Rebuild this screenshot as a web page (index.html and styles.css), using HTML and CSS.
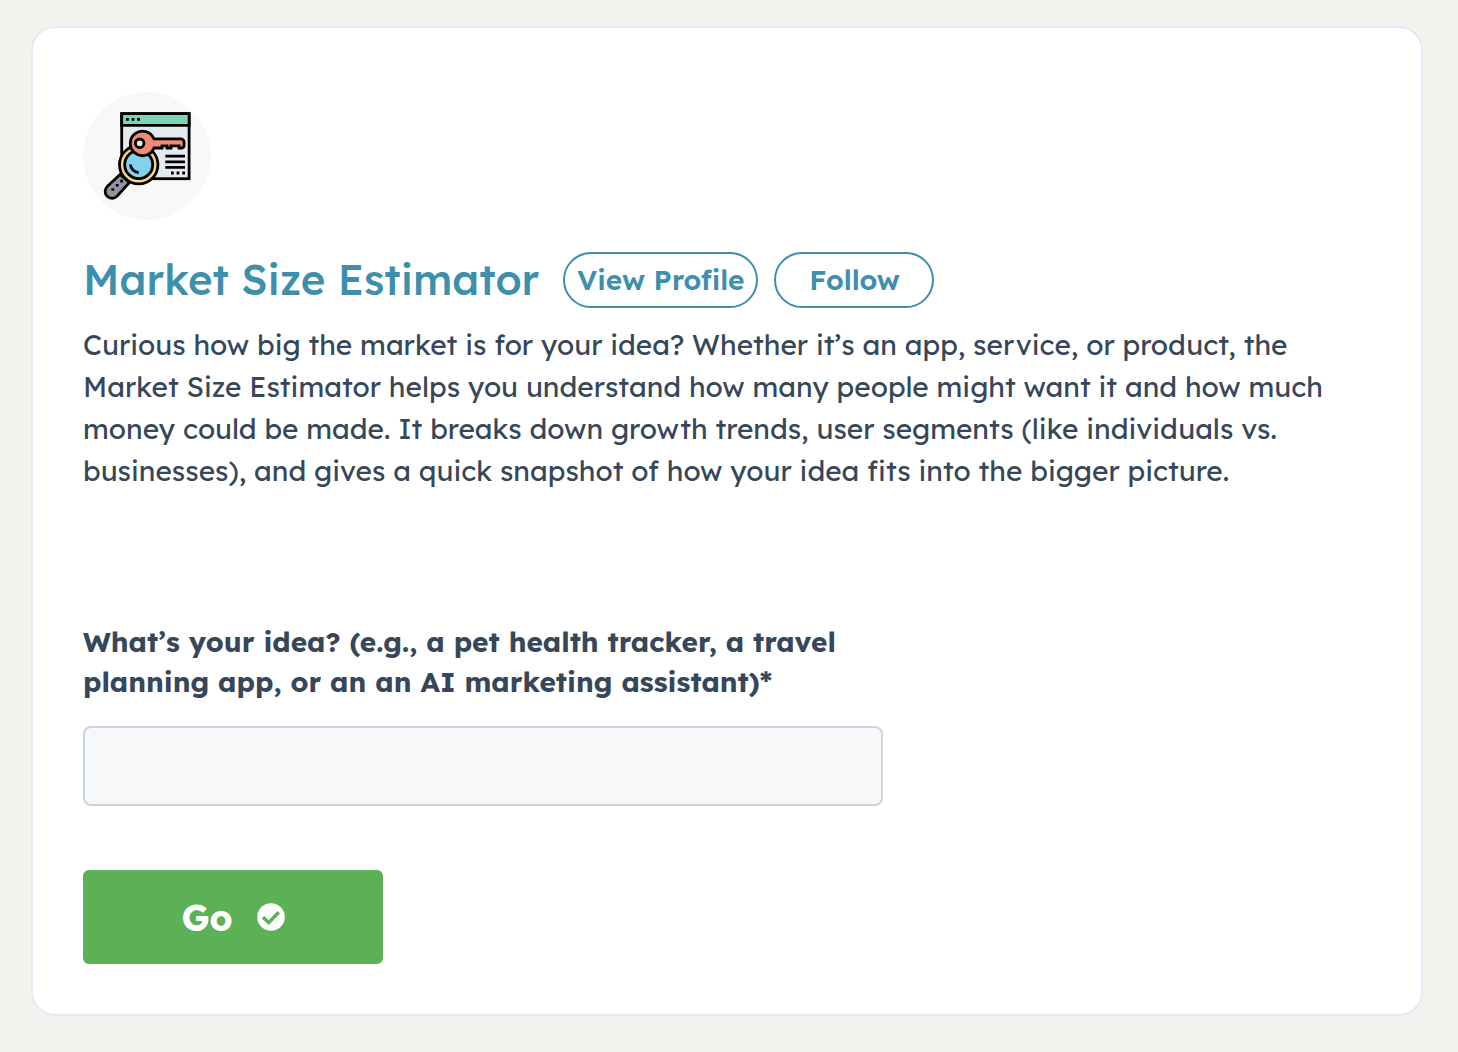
FILE: index.html
```html
<!DOCTYPE html>
<html lang="en">
<head>
  <meta charset="UTF-8">
  <meta name="viewport" content="width=device-width, initial-scale=1.0">
  <title>Market Size Estimator</title>
  <link rel="stylesheet" href="styles.css">
</head>
<body>
  <main class="card">
    <div class="avatar">
      <svg viewBox="0 0 128 128" fill="none" stroke="#000" stroke-width="2.8" aria-hidden="true">
        <!-- browser window -->
        <rect x="38.7" y="21.7" width="67.4" height="65" fill="#e6e9ee"/>
        <path d="M38.7 21.7h67.4v11.6H38.7z" fill="#7fd4b3"/>
        <path d="M43 27.4h2.8M48.6 27.4h2.8M54.2 27.4h2.8"/>
        <path d="M82.3 64.2H102M82.3 69.8H102M82.3 75.3H102"/>
        <path d="M88 81h2.8M93.6 81h2.8M99.2 81h2.8"/>
        <!-- magnifier -->
        <path d="M37 82.5L24.2 94.5a6.9 6.9 0 0 0 9.8 9.8L46.5 90.5z" fill="#9094a0"/>
        <path d="M28.4 97.5h2.8M32.8 93.300h2.8M37.2 89.100h2.8" stroke-width="2.6"/>
        <circle cx="55.7" cy="72.7" r="19.2" fill="#fbd77f"/>
        <circle cx="55.7" cy="72.7" r="14" fill="#83d1f1"/>
        <path d="M47.3 72.5c.8 4.5 4 7.5 8.4 8.2"/>
        <!-- key -->
        <path d="M71 46.8h26.6a3.5 3.5 0 0 1 3.5 3.5v3q0 2.7-2.6 2.7H96v-2.200h-8v2.200h-4v-2.200h-5v2.200h-8A12.3 12.3 0 1 1 71 46.800z" fill="#f08a75"/>
        <circle cx="56.7" cy="51.3" r="4.3" fill="#e6e9ee"/>
      </svg>
    </div>

    <div class="title-row">
      <h1 class="title">Market Size Estimator</h1>
      <div class="actions">
        <button type="button" class="pill">View Profile</button>
        <button type="button" class="pill">Follow</button>
      </div>
    </div>

    <p class="description">Curious how big the market is for your idea? Whether it’s an app, service, or product, the Market Size Estimator helps you understand how many people might want it and how much money could be made. It breaks down growth trends, user segments (like individuals vs. businesses), and gives a quick snapshot of how your idea fits into the bigger picture.</p>

    <form class="idea-form">
      <label class="idea-label" for="idea">What’s your idea? (e.g., a pet health tracker, a travel planning app, or an an AI marketing assistant)*</label>
      <input class="idea-input" type="text" id="idea" name="idea" required>
      <button type="submit" class="go-btn">
        Go
        <svg class="check" viewBox="0 0 28 28" aria-hidden="true">
          <circle cx="14" cy="14" r="13.8" fill="#fff"/>
          <path d="M6 14.2l5.7 5.4L21.8 9.2" fill="none" stroke="#5cb157" stroke-width="3.4"/>
        </svg>
      </button>
    </form>
  </main>
</body>
</html>
```

FILE: styles.css
```css
* {
  box-sizing: border-box;
}

body {
  margin: 0;
  padding: 26px 35px 36px 31px;
  background-color: #f3f2ee;
  color: #37475a;
  font-family: "Lexend Deca", Lexend, Inter, sans-serif;
  font-size: 28px;
}

.card {
  background-color: #fff;
  border: 2px solid #e8e8f8;
  border-radius: 24px;
  padding: 64px 50px 50px;
}

.avatar {
  width: 128px;
  height: 128px;
  border-radius: 50%;
  background-color: #f8f8f8;
}

.avatar svg {
  display: block;
}

.title-row {
  display: flex;
  flex-wrap: wrap;
  align-items: center;
  gap: 24px;
  margin-top: 32px;
}

.title {
  margin: 0;
  color: #3e8fac;
  font-size: 42px;
  font-weight: 500;
  line-height: 56px;
}

.actions {
  display: flex;
  gap: 16px;
}

.pill {
  min-width: 160px;
  height: 56px;
  padding: 0 12px 2px;
  border: 2px solid #3e8fac;
  border-radius: 28px;
  background: none;
  color: #3e8fac;
  font-family: inherit;
  font-size: 28px;
  font-weight: 600;
  cursor: pointer;
}

.description {
  margin: 16px 0 0;
  line-height: 42px;
}

.idea-form {
  display: flex;
  flex-direction: column;
  align-items: flex-start;
  max-width: 800px;
  margin-top: 130px;
}

.idea-label {
  font-weight: 700;
  line-height: 40px;
}

.idea-input {
  width: 100%;
  height: 80px;
  margin-top: 24px;
  padding: 0 20px;
  border: 2px solid #cbd5e2;
  border-radius: 8px;
  background-color: #f6f8fa;
  color: inherit;
  font: inherit;
}

.go-btn {
  display: flex;
  align-items: center;
  justify-content: center;
  gap: 24px;
  width: 300px;
  height: 94px;
  margin-top: 64px;
  border: none;
  border-radius: 6px;
  background-color: #5cb157;
  color: #fff;
  font-family: inherit;
  font-size: 36px;
  font-weight: 700;
  cursor: pointer;
}

.check {
  width: 28px;
  height: 28px;
}
```
